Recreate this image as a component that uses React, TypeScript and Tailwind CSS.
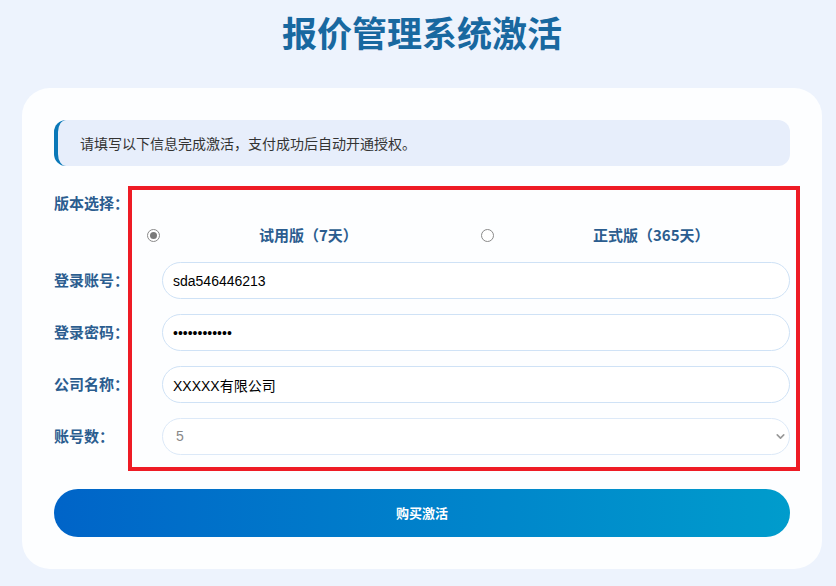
import React from 'react';
import { ChevronDown } from 'lucide-react';

const font = { fontFamily: '"Noto Sans CJK SC", "Noto Sans", sans-serif' };
const latin = { fontFamily: '"Liberation Sans", "Noto Sans CJK SC", sans-serif' };

function Row({ label, children }: { label: string; children: React.ReactNode }) {
  return (
    <div className="flex items-center">
      <div className="w-[108px] shrink-0 text-[15px] font-bold text-[#2b5d8f]">{label}</div>
      <div className="flex-1">{children}</div>
    </div>
  );
}

function Radio({ checked }: { checked?: boolean }) {
  return (
    <span className="w-[13px] h-[13px] rounded-full border border-[#8a8a8a] bg-white flex items-center justify-center">
      {checked && <span className="w-[7px] h-[7px] rounded-full bg-[#7a7a7a]" />}
    </span>
  );
}

export default function App() {
  const inputCls =
    'w-full h-[37px] rounded-full border border-[#cfe2f6] bg-white pl-[10px] text-[14px] text-black outline-none';

  return (
    <div className="min-h-screen bg-[#edf3fd] pl-[22px] pt-[9px] pb-[20px]" style={font}>
      <h1 className="w-[800px] text-center text-[35px] font-bold leading-[46px] text-[#1868a0]">
        报价管理系统激活
      </h1>

      <div className="relative mt-[33px] w-[800px] rounded-[28px] bg-[#fdfeff] px-[32px] pt-[32px] pb-[32px]">
        <div className="h-[46px] rounded-xl border-l-4 border-[#0a78b8] bg-[#e7eefb] pl-[22px] flex items-center text-[14px] text-[#333]">
          请填写以下信息完成激活，支付成功后自动开通授权。
        </div>

        <div className="mt-[27px] flex items-start">
          <div className="w-[93px] shrink-0 text-[15px] font-bold leading-[20px] text-[#2b5d8f]">版本选择：</div>
          <div className="mt-[32px] flex flex-1 h-[20px] items-center">
            <div className="flex w-[334px] items-center">
              <Radio checked />
              <span className="ml-[99px] text-[15px] font-bold text-[#2b5d8f]">试用版（7天）</span>
            </div>
            <div className="flex items-center">
              <Radio />
              <span className="ml-[99px] text-[15px] font-bold text-[#2b5d8f]">正式版（365天）</span>
            </div>
          </div>
        </div>

        <div className="mt-[17px] flex flex-col gap-[15px]">
          <Row label="登录账号：">
            <input className={inputCls} style={latin} defaultValue="sda546446213" />
          </Row>
          <Row label="登录密码：">
            <input type="password" className={inputCls} style={latin} defaultValue="123456789012" />
          </Row>
          <Row label="公司名称：">
            <input className={inputCls} style={latin} defaultValue="XXXXX有限公司" />
          </Row>
          <Row label="账号数：">
            <div className="relative">
              <select
                className="w-full h-[37px] appearance-none rounded-full border border-[#dce9f8] bg-white pl-[13px] text-[14px] text-[#888] outline-none"
                style={latin}
                defaultValue="5"
              >
                <option value="5">5</option>
              </select>
              <ChevronDown size={13} strokeWidth={3} className="absolute right-[3px] top-[12px] text-[#999]" />
            </div>
          </Row>
        </div>

        <button className="mt-[34px] w-full h-[48px] rounded-full bg-gradient-to-r from-[#0064c8] to-[#019ccc] text-[13px] font-bold text-white">
          购买激活
        </button>

        <div className="absolute left-[106px] top-[98px] w-[672px] h-[285px] border-4 border-[#ee1c25] pointer-events-none" />
      </div>
    </div>
  );
}
